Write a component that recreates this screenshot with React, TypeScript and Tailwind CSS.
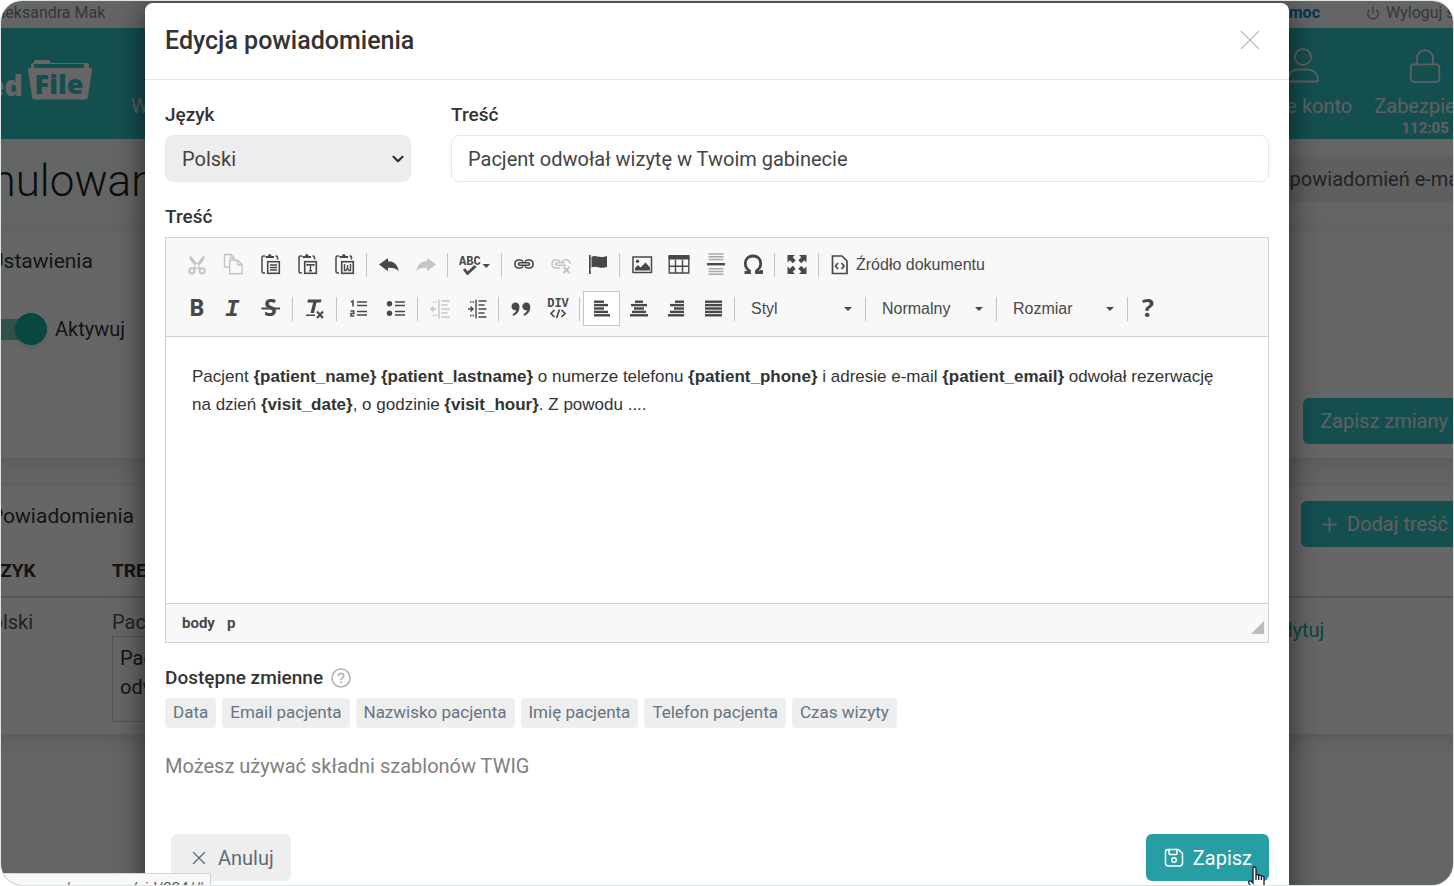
import type { ReactNode } from 'react'
import clsx from 'clsx'
import { FiChevronDown, FiLock, FiPower, FiPlus, FiX } from 'react-icons/fi'

type Tool = { label: string; icon: ReactNode; disabled?: boolean; active?: boolean; wide?: boolean }

const variables = ['Data', 'Email pacjenta', 'Nazwisko pacjenta', 'Imię pacjenta', 'Telefon pacjenta', 'Czas wizyty']

function Icon({ children, w = 24 }: { children: ReactNode; w?: number }) {
  return (
    <svg width={w} height={24} viewBox={`0 0 ${w} 24`} fill="currentColor" aria-hidden="true">
      {children}
    </svg>
  )
}

function Clipboard({ children }: { children: ReactNode }) {
  return (
    <Icon>
      <path d="M6 3H4.500Q3 3 3 4.500V18.500q0 1.500 1.500 1.500H6M16.500 3h.5q1.500 0 1.500 1.500v2" fill="none" stroke="currentColor" strokeWidth="1.500" />
      <path d="M6.500 5V3h2.500Q9.500 1 10.800 1t1.800 2H15v2z" />
      <rect x="8.700" y="8.700" width="11.600" height="11.600" fill="#f8f8f8" stroke="currentColor" strokeWidth="1.600" />
      <g fill="none" stroke="currentColor" strokeWidth="1.400" transform="translate(0 -1)">{children}</g>
    </Icon>
  )
}

function Lines({ rows }: { rows: [number, number][] }) {
  return (
    <Icon>
      {rows.map(([x, w], i) => (
        <rect key={i} x={x} y={3.5 + i * 3.4} width={w} height="2.4" />
      ))}
    </Icon>
  )
}

function Caret() {
  return (
    <svg width="8" height="4" viewBox="0 0 8 4" fill="currentColor" aria-hidden="true">
      <path d="M0 0h8L4 4z" />
    </svg>
  )
}

const undoPath = 'M2 11.500 11 5v3.200c6 0 10 3.300 10.500 10-2.500-2.800-5.500-3.500-10.500-3.300v3.300z'
const indentLines = 'M13.500 4h8M13.500 8h6M13.500 12h8M13.500 16h6M13.500 20h8'

const firstRow: Tool[][] = [
  [
    {
      label: 'Wytnij',
      disabled: true,
      icon: (
        <Icon>
          <path d="M5 2 15.500 14.500l-2.500 2L5.500 7.500Q3.800 4.500 5 2zM19 2 8.500 14.500l2.500 2L18.500 7.500Q20.200 4.500 19 2z" />
          <g fill="none" stroke="currentColor" strokeWidth="2">
            <circle cx="6.800" cy="17.800" r="2.600" />
            <circle cx="17.200" cy="17.800" r="2.600" />
          </g>
        </Icon>
      ),
    },
    {
      label: 'Kopiuj',
      disabled: true,
      icon: (
        <Icon>
          <g fill="none" stroke="currentColor" strokeWidth="1.400">
            <path d="M7 14H2.500V1.500h6.500l3 3v2.500M8.500 1.500V5H12" />
            <path d="M7.700 7.200h7.800l4.500 4.500v9H7.700zM15.500 7.200v4.500H20" />
          </g>
        </Icon>
      ),
    },
    { label: 'Wklej', icon: <Clipboard><path d="M11 13h7M11 15.500h7M11 18h7" /></Clipboard> },
    { label: 'Wklej jako tekst', icon: <Clipboard><path d="M11.200 14v-1.200h6.600V14M14.500 12.800v6M13 18.700h3" /></Clipboard> },
    { label: 'Wklej z programu Word', icon: <Clipboard><path d="M11.500 12v6.500h1.500l1.500-2.500 1.500 2.500h1.500V12M14.500 13v3" /></Clipboard> },
  ],
  [
    { label: 'Cofnij', icon: <Icon><path d={undoPath} /></Icon> },
    { label: 'Ponów', disabled: true, icon: <Icon><path d={undoPath} transform="translate(24 0) scale(-1 1)" /></Icon> },
  ],
  [
    {
      label: 'Sprawdź pisownię',
      wide: true,
      icon: (
        <Icon w={32}>
          <text x="0" y="12" fontSize="12" fontWeight="700" fontFamily="Liberation Mono, monospace">ABC</text>
          <path d="m5 16 3.500 4.500L16.500 13" fill="none" stroke="currentColor" strokeWidth="2.800" />
          <path d="M23.500 11h7.500l-3.700 4z" />
        </Icon>
      ),
    },
  ],
  [
    {
      label: 'Wstaw odnośnik',
      icon: (
        <Icon>
          <g fill="none" stroke="currentColor" strokeWidth="1.600">
            <path d="M11 8.700Q10.300 7 8 7H6.500Q3 7 3 11t3.500 4H8q2.300 0 3-1.700M13 8.700q.7-1.700 3-1.700h1.500q3.500 0 3.500 4t-3.500 4H16q-2.300 0-3-1.700" />
            <rect x="6.500" y="9.700" width="11" height="2.600" rx="1.300" />
          </g>
        </Icon>
      ),
    },
    {
      label: 'Usuń odnośnik',
      disabled: true,
      icon: (
        <Icon>
          <g fill="none" stroke="currentColor" strokeWidth="1.600">
            <path d="M11 8.700Q10.300 7 8 7H6.500Q3 7 3 11t3.500 4H11M13 8.700q.7-1.700 3-1.700h1.500q3.500 0 3.500 4" />
            <path d="M17 12.300H8q-1.500 0-1.500-1.300T8 9.700h8" />
            <path d="m14.500 14 6 6m0-6-6 6" strokeWidth="2" />
          </g>
        </Icon>
      ),
    },
    {
      label: 'Wstaw kotwicę',
      icon: (
        <Icon>
          <path d="M3 2h1.700v19H3zM5.500 4c4-3 7 2 15.500-1V14c-7 2.500-11-2-15.500.5z" />
        </Icon>
      ),
    },
  ],
  [
    {
      label: 'Obrazek',
      icon: (
        <Icon>
          <rect x="3" y="4" width="18.500" height="15.500" fill="none" stroke="currentColor" strokeWidth="1.500" />
          <circle cx="7.500" cy="8.200" r="1.700" />
          <path d="M5 17.500v-2.500L8 12l2.500 2.500 5-5L20 14.500v3z" />
        </Icon>
      ),
    },
    {
      label: 'Tabela',
      icon: (
        <Icon>
          <path d="M1.500 2h21v4.500h-21z" />
          <path d="M2.200 3.500v16.500h19.600V3.500M2 13.300h20M8.500 6.500V20M15.500 6.500V20" fill="none" stroke="currentColor" strokeWidth="1.400" />
        </Icon>
      ),
    },
    {
      label: 'Wstaw poziomą linię',
      icon: (
        <Icon>
          <path d="M4.500 1h15M4.500 3.800h15M4.500 6.600h15M4.500 15.800h15M4.500 18.500h15M4.500 21.300h15" stroke="#a9a9a9" strokeWidth="1.500" />
          <path d="M3 10h18v2.400H3z" />
        </Icon>
      ),
    },
    {
      label: 'Wstaw znak specjalny',
      icon: (
        <Icon>
          <path
            d="M3.500 19.500h5V18C5.500 16 4.300 13.500 4.300 10.500 4.300 6 7.500 3 12 3s7.700 3 7.700 7.500c0 3-1.200 5.500-4.200 7.500v1.500h5V17"
            fill="none"
            stroke="currentColor"
            strokeWidth="2.800"
          />
        </Icon>
      ),
    },
  ],
  [
    {
      label: 'Maksymalizuj',
      icon: (
        <Icon>
          <path d="M2.500 2H10L7.700 4.300l3 3-2.900 2.900-3-3L2.500 9.500zM21.500 2v7.500l-2.300-2.300-3 3-2.900-2.900 3-3L14 2zM2.500 21v-7.500l2.300 2.300 3-3 2.900 2.900-3 3 2.300 2.300zM21.500 21H14l2.300-2.300-3-3 2.900-2.900 3 3 2.300-2.300z" />
        </Icon>
      ),
    },
  ],
]

const secondRow: Tool[][] = [
  [
    { label: 'Pogrubienie', icon: <Icon><text x="4" y="19" fontSize="23" fontWeight="700" fontFamily="Open Sans">B</text></Icon> },
    { label: 'Kursywa', icon: <Icon><text x="3" y="19" fontSize="24" fontWeight="700" fontStyle="italic" fontFamily="Liberation Mono">I</text></Icon> },
    {
      label: 'Przekreślenie',
      icon: (
        <Icon>
          <text x="5" y="19" fontSize="23" fontWeight="700" fontFamily="Open Sans">S</text>
          <path d="M2.500 10.500h18.500v2H2.500z" />
        </Icon>
      ),
    },
  ],
  [
    {
      label: 'Usuń formatowanie',
      icon: (
        <Icon>
          <path d="M5 2.500h13.500l-.8 3h-4.200L11 16H7.500l2.700-10.500H4.300z" />
          <path d="M3 17.500h9V19H3z" />
          <path d="m14 14.500 6 6.500m0-6.500-6 6.500" stroke="currentColor" strokeWidth="2" />
        </Icon>
      ),
    },
  ],
  [
    {
      label: 'Lista numerowana',
      icon: (
        <Icon>
          <path d="M10 5h10M10 8.500h10M10 14.500h10M10 18h10" stroke="currentColor" strokeWidth="1.500" />
          <path d="M4 5 6 4V9.500M3.500 14h3.300v2.500H4V19h3.300" fill="none" stroke="currentColor" strokeWidth="1.500" />
        </Icon>
      ),
    },
    {
      label: 'Lista wypunktowana',
      icon: (
        <Icon>
          <path d="M11 5h10M11 8.500h10M11 14.500h10M11 18h10" stroke="currentColor" strokeWidth="1.500" />
          <circle cx="5.500" cy="6.700" r="2.700" />
          <circle cx="5.500" cy="16.300" r="2.700" />
        </Icon>
      ),
    },
  ],
  [
    {
      label: 'Zmniejsz wcięcie',
      disabled: true,
      icon: (
        <Icon>
          <path d={indentLines} stroke="currentColor" strokeWidth="1.300" />
          <path d="M11 2.500v19M3 12h5M5.500 9.500 3 12l2.500 2.500" fill="none" stroke="currentColor" strokeWidth="1.400" />
          <path d="M5 5h4M5 18.500h4" stroke="currentColor" strokeWidth="1.400" strokeDasharray="1.500 1" />
        </Icon>
      ),
    },
    {
      label: 'Zwiększ wcięcie',
      icon: (
        <Icon>
          <path d={indentLines} stroke="currentColor" strokeWidth="1.300" />
          <path d="M11 2.500v19M3 12h5M5.500 9.500 8 12l-2.500 2.500" fill="none" stroke="currentColor" strokeWidth="1.400" />
          <path d="M5 5h4M5 18.500h4" stroke="currentColor" strokeWidth="1.400" strokeDasharray="1.500 1" />
        </Icon>
      ),
    },
  ],
  [
    {
      label: 'Cytat',
      icon: (
        <Icon>
          <path d="M6.500 5.500c2.400 0 4 1.800 4 4.500 0 4-2.300 7.500-6.300 8.700l-.7-1.500c2-.9 3.300-2.300 3.600-4C4.500 13.500 2.500 12 2.500 9.500c0-2.300 1.700-4 4-4zM17.300 5.500c2.400 0 4 1.800 4 4.500 0 4-2.300 7.500-6.300 8.700l-.7-1.500c2-.9 3.300-2.300 3.600-4-2.600.3-4.600-1.200-4.600-3.700 0-2.300 1.700-4 4-4z" />
        </Icon>
      ),
    },
    {
      label: 'Utwórz pojemnik Div',
      icon: (
        <Icon>
          <text x="12" y="10" textAnchor="middle" fontSize="12" fontFamily="Liberation Mono" fontWeight="700">DIV</text>
          <path d="M8.500 13 5 16.500 8.500 20M15.500 13l3.500 3.500-3.500 3.500M13.500 12.500l-3 8.500" fill="none" stroke="currentColor" strokeWidth="1.700" />
        </Icon>
      ),
    },
  ],
  [
    { label: 'Wyrównaj do lewej', active: true, icon: <Lines rows={[[4, 10], [4, 14], [4, 10], [4, 14], [4, 16]]} /> },
    { label: 'Wyśrodkuj', icon: <Lines rows={[[8, 8], [4, 16], [7, 10], [5, 14], [3, 18]]} /> },
    { label: 'Wyrównaj do prawej', icon: <Lines rows={[[11, 9], [6, 14], [10, 10], [6, 14], [4, 16]]} /> },
    { label: 'Wyjustuj', icon: <Lines rows={[[4, 17], [4, 17], [4, 17], [4, 17], [4, 17]]} /> },
  ],
]

function Separator() {
  return (
    <span className="flex w-[7px] shrink-0 justify-center">
      <span className="h-6 w-px bg-[#c3c3c3]" />
    </span>
  )
}

function ToolButton({ label, icon, disabled, active, wide }: Tool) {
  return (
    <button
      type="button"
      aria-label={label}
      disabled={disabled}
      className={clsx(
        'flex h-[35px] shrink-0 items-center justify-center',
        wide ? 'w-[47px]' : 'w-[37px]',
        active && 'border border-[#c6c6c6] bg-white',
        disabled ? 'text-[#c4c4c4]' : 'text-[#484848]',
      )}
    >
      {icon}
    </button>
  )
}

function ToolGroups({ groups }: { groups: Tool[][] }) {
  return groups.map((group, i) => (
    <div key={i} className="flex items-center">
      {group.map((tool) => (
        <ToolButton key={tool.label} {...tool} />
      ))}
      <Separator />
    </div>
  ))
}

function Combo({ label }: { label: string }) {
  return (
    <div className="flex items-center">
      <div className="relative text-[#484848]">
        <select aria-label={label} className="h-[35px] w-[124px] appearance-none pl-[13px] font-['Liberation_Sans',sans-serif] text-base">
          <option>{label}</option>
        </select>
        <span className="pointer-events-none absolute top-4 right-2.5">
          <Caret />
        </span>
      </div>
      <Separator />
    </div>
  )
}

function Editor() {
  return (
    <div className="border border-[#d1d1d1]">
      <div className="flex flex-col gap-[9px] border-b border-[#d1d1d1] bg-[#f8f8f8] px-3 pt-[9px] pb-2.5">
        <div className="flex items-center">
          <ToolGroups groups={firstRow} />
          <button
            type="button"
            className="flex h-[35px] items-center gap-1 px-1.5 font-['Liberation_Sans',sans-serif] text-base text-[#484848]"
          >
            <Icon>
              <path d="M4.500 3h9.500l5 5v12.500H4.500z" fill="none" stroke="currentColor" strokeWidth="1.700" />
              <path d="M10 10 7.500 13l2.500 3M13.500 10l2.500 3-2.500 3" fill="none" stroke="currentColor" strokeWidth="1.700" />
            </Icon>
            Źródło dokumentu
          </button>
        </div>
        <div className="flex items-center">
          <ToolGroups groups={secondRow} />
          <Combo label="Styl" />
          <Combo label="Normalny" />
          <Combo label="Rozmiar" />
          <ToolButton
            label="O programie"
            icon={<Icon><text x="4" y="20" fontSize="25" fontWeight="700" fontFamily="Open Sans">?</text></Icon>}
          />
        </div>
      </div>
      <div
        role="textbox"
        aria-labelledby="content-label"
        contentEditable
        suppressContentEditableWarning
        className="min-h-[266px] py-[26px] pr-9 pl-[26px] font-['Liberation_Sans',sans-serif] text-[17px] leading-7 text-[#333]"
      >
        <p>
          Pacjent <b>{'{patient_name}'}</b> <b>{'{patient_lastname}'}</b> o numerze telefonu <b>{'{patient_phone}'}</b> i
          adresie e-mail <b>{'{patient_email}'}</b> odwołał rezerwację na dzień <b>{'{visit_date}'}</b>, o godzinie{' '}
          <b>{'{visit_hour}'}</b>. Z powodu ....
        </p>
      </div>
      <div className="flex h-[39px] items-center justify-between border-t border-[#d1d1d1] bg-[#f8f8f8] pr-1 pl-4 text-[15px] font-bold text-[#484848]">
        <div className="flex gap-3">
          <span>body</span>
          <span>p</span>
        </div>
        <svg width="13" height="13" viewBox="0 0 13 13" className="mt-2 fill-[#bcbcbc]" aria-hidden="true">
          <path d="M13 0v13H0z" />
        </svg>
      </div>
    </div>
  )
}

function Modal() {
  return (
    <div role="dialog" aria-labelledby="modal-title" className="rounded-lg bg-white text-[#333] shadow-[0_5px_30px_rgba(0,0,0,0.6)]">
      <div className="flex h-[77px] items-center justify-between border-b border-[#e5e5e5] px-5">
        <h2 id="modal-title" className="text-[25px] font-medium">
          Edycja powiadomienia
        </h2>
        <button type="button" aria-label="Zamknij" className="text-[#c2c2c2]">
          <svg width="36" height="36" viewBox="0 0 36 36" fill="none" stroke="currentColor" strokeWidth="1.500" aria-hidden="true">
            <path d="m8 8 18 18M26 8 8 26" />
          </svg>
        </button>
      </div>
      <form className="px-5 pt-[21px]" onSubmit={(e) => e.preventDefault()}>
        <div className="grid grid-cols-[246px_1fr] gap-10">
          <div>
            <label htmlFor="language" className="mb-1.5 block text-[19px] leading-7 font-medium">
              Język
            </label>
            <div className="relative">
              <select id="language" className="h-[47px] w-full appearance-none rounded-lg border border-[#e8eaee] bg-[#ededed] px-4 text-xl text-[#444]">
                <option>Polski</option>
              </select>
              <FiChevronDown className="pointer-events-none absolute top-[15px] right-1 h-[18px] w-[18px]" strokeWidth={3} />
            </div>
          </div>
          <div>
            <label htmlFor="subject" className="mb-1.5 block text-[19px] leading-7 font-medium">
              Treść
            </label>
            <input
              id="subject"
              type="text"
              defaultValue="Pacjent odwołał wizytę w Twoim gabinecie"
              className="h-[47px] w-full rounded-lg border border-[#e9e9e9] px-4 text-xl text-[#444]"
            />
          </div>
        </div>
        <div id="content-label" className="mt-[21px] mb-1.5 text-[19px] leading-7 font-medium">
          Treść
        </div>
        <Editor />
        <div className="mt-[21px] mb-1.5 flex items-center gap-2 text-[19px] leading-7 font-medium">
          Dostępne zmienne
          <svg width="20" height="20" viewBox="0 0 20 20" className="text-[#b3b3b3]" fill="none" stroke="currentColor" strokeWidth="1.600" aria-hidden="true">
            <circle cx="10" cy="10" r="9" />
            <path d="M7.300 8q0-2.700 2.700-2.700T12.700 8q0 1.300-1.500 2Q10 10.600 10 12M10 13.300v1.700" strokeWidth="1.800" />
          </svg>
        </div>
        <div className="flex flex-wrap gap-1.5">
          {variables.map((name) => (
            <button key={name} type="button" className="h-[30px] rounded bg-[#eee] px-2 text-[17px] text-[#657482]">
              {name}
            </button>
          ))}
        </div>
        <p className="mt-6 text-xl text-[#808080]">Możesz używać składni szablonów TWIG</p>
        <div className="flex justify-between pt-[54px] pb-8 pl-1.5">
          <button type="button" className="flex h-[47px] items-center gap-2 rounded-md bg-[#eee] px-[17px] text-xl text-[#5f6c79]">
            <FiX className="h-[22px] w-[22px]" strokeWidth={1.5} />
            Anuluj
          </button>
          <div className="relative">
            <button type="submit" className="flex h-[47px] items-center gap-2 rounded-md bg-[#279ea3] px-[17px] text-xl text-white">
              <svg width="22" height="22" viewBox="0 0 22 22" fill="none" stroke="currentColor" strokeWidth="1.500" aria-hidden="true">
                <path d="M5 2.500h10.500l4 4V16q0 3-3 3h-11q-3 0-3-3V5q0-2.500 2.500-2.500z" />
                <path d="M6 2.500v4q0 1 1 1h6q1 0 1-1v-4" />
                <circle cx="11" cy="13" r="2.300" />
              </svg>
              Zapisz
            </button>
            <svg width="20" height="28" viewBox="0 0 20 28" className="absolute top-8 right-0.5" aria-hidden="true">
              <path
                d="M6 17V2.500Q6 1 7.500 1T9 2.500v7q0-1 1.300-1t1.400 1.500q.3-1 1.500-.8t1.200 1.500q.3-.8 1.500-.5t1.100 1.800V18q0 4-2.500 6v3H6.500v-2L2 17.500q-1-2 .5-2.500T6 17zM9 9.500V14M11.700 10v4M14.400 11v3"
                fill="white"
                stroke="#111827"
                strokeWidth="1.300"
              />
            </svg>
          </div>
        </div>
      </form>
    </div>
  )
}

function Logo() {
  return (
    <svg width="132" height="46" viewBox="0 0 132 46" role="img" aria-label="MedFile" fontFamily="Open Sans" fontWeight="800">
      <text x="62" y="38" textAnchor="end" fontSize="29" fill="#fff">
        Med
      </text>
      <path d="M70 12V7q0-2 2-2h1V4q0-2 1-2h14q1 0 1 2v1h36q3 0 3 2v5z" fill="#fff" />
      <path d="M73 6h50v5H73z" fill="#32c5c8" />
      <path d="M69 10h60q2.500 0 2 2.500l-4 26q-.4 3-3 3H74q-2.600 0-3-3l-4-26q-.4-2.500 2-2.500z" fill="#fff" />
      <text x="98" y="36" textAnchor="middle" fontSize="27" fill="#32c5c8">
        File
      </text>
    </svg>
  )
}

function Page() {
  return (
    <div aria-hidden="true" className="-mr-10 -ml-10 bg-[#fafffd] text-[#333]">
      <div className="flex h-[27px] items-start justify-between pr-[26px] pl-[30px] text-base leading-6 text-[#888]">
        <span>Aleksandra Mak</span>
        <div className="flex items-center">
          <a href="#pomoc" className="mr-[46px] font-bold text-[#0c86d6]">Pomoc</a>
          <FiPower className="mr-[6px] h-3.5 w-3.5" />
          <a href="#wyloguj">Wyloguj się</a>
        </div>
      </div>

      <header className="flex h-[111px] items-start justify-between bg-[#32c5c8] px-[17px] text-xl leading-6 text-[#ededed]">
        <div className="flex">
          <div className="-ml-[17px] pt-[30px]">
            <Logo />
          </div>
          <span className="pt-[66px] pl-[38px]">Wizyty</span>
        </div>
        <nav className="flex gap-[22px] pt-[19px]">
          <a href="#konto" className="flex flex-col items-center gap-[11px]">
            <svg width="36" height="36" viewBox="0 0 36 36" fill="none" stroke="currentColor" strokeWidth="1.800" aria-hidden="true">
              <circle cx="18" cy="10" r="8" />
              <path d="M4 34.500q-1 0-1-2 1-10 11-10h8q10 0 11 10 0 2-1 2z" />
            </svg>
            Moje konto
          </a>
          <a href="#zabezpiecz" className="flex flex-col items-center">
            <FiLock className="mb-[9px] h-[38px] w-[38px]" strokeWidth={1.2} />
            Zabezpiecz
            <b className="text-[15px] leading-5">112:05</b>
          </a>
        </nav>
      </header>

      <div className="flex h-[92px] items-center justify-between pr-2 pl-[3px]">
        <h1 className="mb-2 text-[44px] font-light text-[#222]">Anulowanie</h1>
        <div className="mb-3 flex h-[45px] items-center bg-[#eee] pr-4 pl-6 text-xl text-[#556]">Treści powiadomień e-mail</div>
      </div>

      <div className="flex flex-col gap-7 pr-2 text-xl">
        <section className="flex h-[227px] flex-col items-start bg-white pr-5 pl-[29px] shadow-[0_5px_20px_rgba(0,0,0,0.12)]">
          <h3 className="pt-4 text-[21px] leading-7">Ustawienia</h3>
          <label className="mt-[38px] flex h-8 items-center gap-2">
            <input type="checkbox" defaultChecked className="sr-only" />
            <span className="flex h-[21px] w-[57px] items-center justify-end rounded-full bg-[#77c9c0]">
              <span className="h-8 w-8 shrink-0 rounded-full bg-[#12b5a8] shadow-md" />
            </span>
            Aktywuj
          </label>
          <button type="button" className="mt-[53px] h-[46px] shrink-0 self-end rounded-md bg-[#32c5c8] px-[17px] text-[#ededed]">
            Zapisz zmiany
          </button>
        </section>

        <section className="h-[248px] bg-white shadow-[0_5px_20px_rgba(0,0,0,0.12)]">
          <div className="flex items-start justify-between pt-[15px] pr-5 pl-[29px]">
            <h3 className="text-[21px] leading-[30px]">Powiadomienia</h3>
            <button type="button" className="flex h-[46px] items-center gap-1.5 rounded-md bg-[#32c5c8] px-[17px] text-[#ededed]">
              <FiPlus className="h-[23px] w-[23px]" strokeWidth={1.7} />
              Dodaj treść
            </button>
          </div>
          <table className="w-full table-fixed text-left">
            <thead>
              <tr className="h-[50px] border-b-2 border-[#d8d8d8] text-[19px]">
                <th className="w-[151px] pl-[18px] font-bold">JĘZYK</th>
                <th className="font-bold">TREŚĆ</th>
                <th className="w-[215px]" />
              </tr>
            </thead>
            <tbody>
              <tr className="align-top leading-7">
                <td className="pt-2.5 pl-[18px] text-[#555]">Polski</td>
                <td className="pt-2.5 text-[#555]">
                  Pacjent
                  <div className="h-[86px] w-[90px] border border-[#d0d0d0] px-[7px] pt-[7px] leading-[29px] text-[#333]">Pacjent odwołał</div>
                </td>
                <td className="pt-[18px]">
                  <a href="#edytuj" className="text-[#12b5a8]">Edytuj</a>
                </td>
              </tr>
            </tbody>
          </table>
        </section>
      </div>
    </div>
  )
}

export default function App() {
  return (
    <div className="relative h-screen overflow-hidden rounded-[22px] border border-[#e0e5e3] bg-[#fafffd] font-[Roboto,sans-serif]">
      <Page />
      <div className="absolute inset-0 overflow-hidden bg-black/60 pt-0.5 pr-[164px] pl-[144px]">
        <Modal />
      </div>
      <div className="absolute bottom-0 left-0 h-3 w-[210px] overflow-hidden border-t border-r border-[#d5d5d5] bg-[#f8f8f8] pt-1 pr-1.5 text-right text-[15px] leading-5 text-[#555]">
        /message/vid/224/#
      </div>
    </div>
  )
}
